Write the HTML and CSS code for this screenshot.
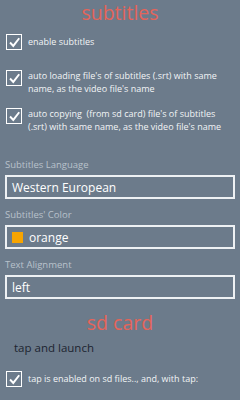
FILE: index.html
```html
<!DOCTYPE html>
<html>
<head>
<meta charset="utf-8">
<link rel="stylesheet" href="styles.css">
</head>
<body>
<div class="page">
  <h1 class="title">subtitles</h1>
  <div class="check-row first">
    <span class="box"><svg viewBox="0 0 16 16" width="16" height="16"><path d="M2.5 8 L6.5 12.2 L13.8 2.8" fill="none" stroke="#fff" stroke-width="2.4"/></svg></span>
    <span class="check-text">enable subtitles</span>
  </div>
  <div class="check-row second">
    <span class="box"><svg viewBox="0 0 16 16" width="16" height="16"><path d="M2.5 8 L6.5 12.2 L13.8 2.8" fill="none" stroke="#fff" stroke-width="2.4"/></svg></span>
    <span class="check-text">auto loading file's of subtitles (.srt) with same name, as the video file's name</span>
  </div>
  <div class="check-row third">
    <span class="box"><svg viewBox="0 0 16 16" width="16" height="16"><path d="M2.5 8 L6.5 12.2 L13.8 2.8" fill="none" stroke="#fff" stroke-width="2.4"/></svg></span>
    <span class="check-text">auto copying &nbsp;(from sd card) file's of subtitles (.srt) with same name, as the video file's name</span>
  </div>

  <div class="field lang">
    <div class="label">Subtitles Language</div>
    <div class="input">Western European</div>
  </div>
  <div class="field">
    <div class="label">Subtitles' Color</div>
    <div class="input"><span class="swatch"></span>orange</div>
  </div>
  <div class="field">
    <div class="label">Text Alignment</div>
    <div class="input">left</div>
  </div>

  <h1 class="title sd">sd card</h1>
  <div class="tap">tap and launch</div>
  <div class="check-row last">
    <span class="box"><svg viewBox="0 0 16 16" width="16" height="16"><path d="M2.5 8 L6.5 12.2 L13.8 2.8" fill="none" stroke="#fff" stroke-width="2.4"/></svg></span>
    <span class="check-text">tap is enabled on sd files.., and, with tap:</span>
  </div>
</div>
</body>
</html>
```

FILE: styles.css
```css
html, body {
  margin: 0;
  padding: 0;
  background: #6c7b8b;
  width: 240px;
  height: 400px;
  overflow: hidden;
}
.page {
  font-family: "Open Sans", "Noto Sans", sans-serif;
  color: #fff;
  padding: 0 5px;
}
.title {
  margin: 0;
  text-align: center;
  font-weight: 400;
  font-size: 19.5px;
  line-height: 26.6px;
  color: #e5645a;
}
.check-row {
  display: flex;
  align-items: flex-start;
  gap: 6px;
  padding-left: 1px;
}
.check-row.first { margin-top: 7.5px; align-items: center; }
.check-row.second { margin-top: 20px; }
.check-row.third { margin-top: 13px; }
.box {
  flex: none;
  width: 16px;
  height: 16px;
  box-sizing: border-box;
  border: 1.5px solid #fff;
  display: flex;
  align-items: center;
  justify-content: center;
}
.box svg { display: block; width: 13px; height: 13px; }
.check-text {
  font-size: 9px;
  line-height: 12.5px;
  color: #f2f4f6;
}
.check-row.first .check-text { line-height: 16px; }
.field { margin-top: 9px; }
.field.lang { margin-top: 25px; }
.label {
  font-size: 9.5px;
  line-height: 13px;
  color: #b9c2cc;
  margin-bottom: 4px;
}
.input {
  box-sizing: border-box;
  height: 24px;
  border: 2px solid #eef1f4;
  display: flex;
  align-items: center;
  padding-left: 5px;
  font-size: 12px;
  color: #fff;
}
.swatch {
  width: 11px;
  height: 11px;
  background: #f7a400;
  margin-right: 6px;
  flex: none;
}
.title.sd { margin-top: 11px; }
.tap {
  margin-top: 1.5px;
  padding-left: 9px;
  font-size: 11.5px;
  line-height: 20px;
  color: #1c2430;
}
.check-row.last { margin-top: 13px; align-items: center; }
.check-row.last .check-text { line-height: 16px; }
```
